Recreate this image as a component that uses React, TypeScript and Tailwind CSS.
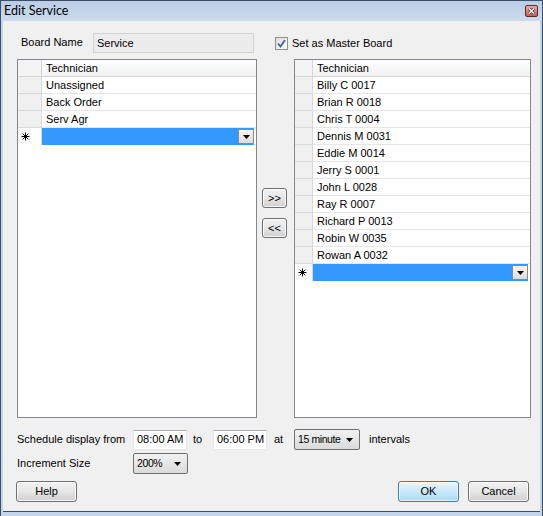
import React from 'react';

const font = { fontFamily: '"Liberation Sans", Arial, sans-serif' };

const leftItems = ['Unassigned', 'Back Order', 'Serv Agr'];
const rightItems = [
  'Billy C 0017',
  'Brian R 0018',
  'Chris T 0004',
  'Dennis M 0031',
  'Eddie M 0014',
  'Jerry S 0001',
  'John L 0028',
  'Ray R 0007',
  'Richard P 0013',
  'Robin W 0035',
  'Rowan A 0032',
];

function Triangle() {
  return (
    <svg width="7" height="4" viewBox="0 0 7 4" className="shrink-0">
      <path d="M0 0 H7 L3.5 4 Z" fill="#000" />
    </svg>
  );
}

function Asterisk() {
  return (
    <svg width="9" height="9" viewBox="0 0 9 9">
      <path d="M4.5 0.5 V8.5 M0.5 4.5 H8.5 M1.7 1.7 L7.3 7.3 M7.3 1.7 L1.7 7.3" stroke="#000" strokeWidth="1" />
    </svg>
  );
}

function Grid({ items, rowHead, width }: { items: string[]; rowHead: string; width: string }) {
  return (
    <div className={`${width} h-[359px] border border-[#828790] bg-white flex flex-col`}>
      <div className="flex h-[17px]">
        <div className={`${rowHead} bg-[#f4f4f4] border-r border-b border-[#d5d5d5]`} />
        <div className="flex-1 bg-gradient-to-b from-white to-[#f1f2f4] border-b border-[#d5d5d5] pl-[4px] text-[11px] leading-[17px] text-black">
          Technician
        </div>
      </div>
      {items.map((t) => (
        <div key={t} className="flex h-[17px]">
          <div className={`${rowHead} bg-[#f0f0f0] border-r border-b border-[#d9d9d9]`} />
          <div className="flex-1 border-b border-[#e6e6e6] pl-[4px] text-[11px] leading-[17px] text-black">{t}</div>
        </div>
      ))}
      <div className="flex h-[17px]">
        <div className={`${rowHead} bg-white border-r border-[#d5d5d5] flex items-center pl-[3px]`}>
          <Asterisk />
        </div>
        <div className="flex-1 mr-[2px] bg-[#3399ff] flex justify-end">
          <div className="w-[16px] h-[15px] mt-[1px] border border-[#8a8a8a] bg-gradient-to-b from-[#f6f6f6] to-[#dcdcdc] flex items-center justify-center">
            <Triangle />
          </div>
        </div>
      </div>
    </div>
  );
}

function WinButton({ children, className = '', primary = false }: { children: React.ReactNode; className?: string; primary?: boolean }) {
  return (
    <div
      className={`${className} rounded-[3px] border flex items-center justify-center text-[11px] text-black ${
        primary
          ? 'border-[#3c7fb1] bg-gradient-to-b from-[#eaf6fd] via-[#c9eafd] to-[#a7d9f5] shadow-[inset_0_0_0_1px_rgba(255,255,255,0.7)]'
          : 'border-[#707070] bg-gradient-to-b from-[#f2f2f2] via-[#e6e6e6] to-[#cfcfcf] shadow-[inset_0_0_0_1px_rgba(255,255,255,0.8)]'
      }`}
    >
      {children}
    </div>
  );
}

function Combo({ text, className }: { text: string; className: string }) {
  return (
    <div className={`${className} h-[21px] rounded-[2px] border border-[#707070] bg-gradient-to-b from-[#f2f2f2] to-[#dadada] flex items-center pl-[3px] pr-[6px] gap-[5px]`}>
      <span className="flex-1 whitespace-nowrap text-[10.5px] leading-none text-black tracking-[-0.4px]">{text}</span>
      <Triangle />
    </div>
  );
}

function TextBox({ text, className }: { text: string; className: string }) {
  return (
    <div className={`${className} h-[20px] bg-white border border-[#e3e9ef] border-t-[#abadb3] flex items-center pl-[3px] text-[11px] text-black`}>
      {text}
    </div>
  );
}

export default function App() {
  return (
    <div className="w-[543px] h-[516px] bg-[#c3d5ea] border-x border-t border-[#3b4f67] flex flex-col" style={font}>
      {/* Title bar */}
      <div className="h-[20px] flex bg-gradient-to-b from-[#b9cde5] to-[#cddcee]">
        <span className="pl-[3px] self-center text-[12.5px] text-black" style={{ fontFamily: 'Lato, "Liberation Sans", sans-serif' }}>
          Edit Service
        </span>
        <div className="ml-auto mr-[4px] mt-[4px]">
          <svg width="13" height="12" viewBox="0 0 13 12">
            <defs>
              <linearGradient id="cb" x1="0" y1="0" x2="0" y2="1">
                <stop offset="0" stopColor="#e9b3a9" />
                <stop offset="1" stopColor="#c25a52" />
              </linearGradient>
            </defs>
            <rect x="0.5" y="0.5" width="12" height="11" rx="1.5" fill="url(#cb)" stroke="#5e2a2a" />
            <path d="M4 3.5 L9 8.5 M9 3.5 L4 8.5" stroke="#3a1a1a" strokeWidth="2.6" />
            <path d="M4 3.5 L9 8.5 M9 3.5 L4 8.5" stroke="#fff" strokeWidth="1.5" />
          </svg>
        </div>
      </div>

      {/* Client area */}
      <div className="mx-[2px] h-[491px] bg-[#f0f0f0] border-b border-[#3b4f67] flex flex-col pl-[14px] pt-[12px] text-[11px] text-black">
        <div className="flex items-center h-[20px]">
          <span className="ml-[4px] w-[72px] -mt-[2px]">Board Name</span>
          <div className="w-[161px] h-[20px] bg-[#ececec] border border-[#d3d3d3] flex items-center pl-[3px]">Service</div>
          <div className="ml-[21px] w-[13px] h-[13px] border border-[#8e8f8f] bg-gradient-to-br from-[#dcdcdc] to-white flex items-center justify-center">
            <svg width="9" height="9" viewBox="0 0 9 9">
              <path d="M1 4.5 L3.5 7.5 L8 1" stroke="#4a5f97" strokeWidth="1.8" fill="none" />
            </svg>
          </div>
          <span className="ml-[4px]">Set as Master Board</span>
        </div>

        <div className="flex mt-[6px]">
          <Grid items={leftItems} rowHead="w-[24px]" width="w-[240px]" />
          <div className="w-[37px] flex flex-col pt-[129px] pl-[5px] gap-[10px]">
            <WinButton className="w-[25px] h-[20px] text-[10px]">&gt;&gt;</WinButton>
            <WinButton className="w-[25px] h-[20px] text-[10px]">&lt;&lt;</WinButton>
          </div>
          <Grid items={rightItems} rowHead="w-[18px]" width="w-[237px]" />
        </div>

        <div className="flex items-center h-[21px] mt-[11px]">
          <span className="w-[116px]">Schedule display from</span>
          <TextBox text="08:00 AM" className="w-[54px]" />
          <span className="ml-[6px] w-[20px]">to</span>
          <TextBox text="06:00 PM" className="w-[54px]" />
          <span className="ml-[7px] w-[20px]">at</span>
          <Combo text="15 minute" className="w-[66px]" />
          <span className="ml-[9px]">intervals</span>
        </div>

        <div className="flex items-center h-[21px] mt-[3px]">
          <span className="w-[116px]">Increment Size</span>
          <Combo text="200%" className="w-[55px]" />
        </div>

        <div className="flex items-center h-[21px] mt-[7px]">
          <WinButton className="-ml-[1px] w-[61px] h-[21px]">Help</WinButton>
          <WinButton primary className="ml-auto w-[61px] h-[21px]">OK</WinButton>
          <WinButton className="ml-[9px] mr-[11px] w-[61px] h-[21px]">Cancel</WinButton>
        </div>
      </div>
    </div>
  );
}
